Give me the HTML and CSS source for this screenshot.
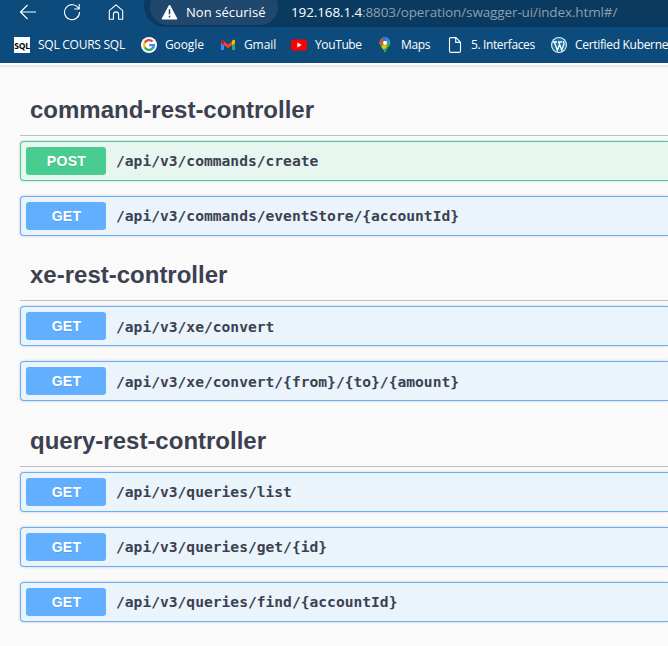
FILE: index.html
```html
<!DOCTYPE html>
<html lang="fr">
<head>
<meta charset="utf-8">
<title>Swagger UI</title>
<link rel="stylesheet" href="styles.css">
</head>
<body>
<header class="browser">
  <div class="toolbar">
    <svg class="nav" width="18" height="18" viewBox="0 0 18 18"><path d="M17 9H1.8M8.500 2L1.500 9l7 7"/></svg>
    <svg class="nav" width="18" height="18" viewBox="0 0 18 18"><path d="M15.600 5.600A7.500 7.500 0 1 0 16.500 9M16.200 1v5h-5"/></svg>
    <svg class="nav" width="18" height="18" viewBox="0 0 18 18"><path d="M2.300 7.700L9 1.800l6.700 5.900V16.200H11.600V11.500a2.600 2.600 0 0 0-5.200 0V16.200H2.300z"/></svg>
    <div class="address">
      <div class="security">
        <svg width="17" height="16" viewBox="0 0 17 16"><path d="M8.500 1L16 15H1z" fill="#fff" stroke="#fff" stroke-linejoin="round"/><path d="M8.500 5.300v5M8.500 11.800v1.700" stroke="#20486c" stroke-width="1.500"/></svg>
        <span class="security-text">Non sécurisé</span>
      </div>
      <div class="url"><span class="host">192.168.1.4</span><span class="path">:8803/operation/swagger-ui/index.html#/</span></div>
    </div>
  </div>
  <nav class="bookmarks">
    <div class="bookmark"><span class="sql-icon">SQL</span><span class="b-sql">SQL COURS SQL</span></div>
    <div class="bookmark"><svg width="16" height="16" viewBox="0 0 16 16"><circle cx="8" cy="8" r="8" fill="#fff"/><g fill="none" stroke-width="2.300"><path d="M11.500 4.500A4.900 4.900 0 0 0 3.700 5.700" stroke="#ea4335"/><path d="M3.700 5.700a4.900 4.900 0 0 0 0 4.600" stroke="#fbbc05"/><path d="M3.700 10.300A4.900 4.900 0 0 0 11.300 11.600" stroke="#34a853"/><path d="M11.300 11.600A4.900 4.900 0 0 0 12.900 8.100H8.200" stroke="#4285f4"/></g></svg><span class="b-google">Google</span></div>
    <div class="bookmark"><svg width="16" height="16" viewBox="0 0 16 16"><path d="M1 4v9h3V6z" fill="#4285f4"/><path d="M12 6v7h3V4z" fill="#34a853"/><path d="M12 4.300v4L15 6V4c0-1.500-1.800-2-3 .3z" fill="#fbbc04"/><path d="M1 4v2l3 2.300V4.300C3 2.500 1 2.500 1 4z" fill="#c5221f"/><path d="M4 4.300L8 7.400l4-3.100v4l-4 3-4-3z" fill="#ea4335"/></svg><span class="b-gmail">Gmail</span></div>
    <div class="bookmark"><svg width="16" height="16" viewBox="0 0 16 16"><rect y="2.500" width="16" height="11" rx="2.500" fill="#f00"/><path d="M6.300 5.400v5.200L10.700 8z" fill="#fff"/></svg><span class="b-youtube">YouTube</span></div>
    <div class="bookmark"><svg width="16" height="16" viewBox="0 0 16 16"><defs><clipPath id="pin"><path d="M8 .3a5.400 5.400 0 0 0-5.400 5.400C2.600 9.500 6.500 10.500 7.300 15q.7 1.400 1.400 0c.8-4.500 4.700-5.500 4.700-9.300A5.400 5.400 0 0 0 8 .3z"/></clipPath></defs><g clip-path="url(#pin)"><path fill="#34a853" d="M0 0h16v16H0z"/><path fill="#fbbc04" d="M0 11L10 0H0z M3 11l9-9-3 9-4 2z"/><path fill="#4285f4" d="M5 0h11L9 8 6 5z"/><path fill="#1a73e8" d="M5 0h4v4L6 5z"/><path fill="#ea4335" d="M0 0h4l3 4-4 4-3-1z"/></g><circle cx="8" cy="5.700" r="2" fill="#fff"/></svg><span class="b-maps">Maps</span></div>
    <div class="bookmark"><svg width="16" height="16" viewBox="0 0 16 16"><path d="M2.500 2q0-1.400 1.400-1.400h5l4.600 4.600v8.800q0 1.400-1.400 1.400H3.900q-1.400 0-1.400-1.400zM8.700.6v4.800h4.800" fill="none" stroke="#fff" stroke-width="1.100"/></svg><span class="b-interfaces">5. Interfaces</span></div>
    <div class="bookmark"><svg width="16" height="16" viewBox="0 0 16 16"><circle cx="8" cy="8" r="8" fill="#e5f1f5"/><circle cx="8" cy="8" r="6.900" fill="#17749d"/><path d="M2 5h4M7 5h4.200M3.400 5.200l3 8L8.600 7.300M7.800 5.200l3 8 2-5.700q.5-1.700-.5-3.300" fill="none" stroke="#fff" stroke-width="1.350"/></svg><span class="b-cert">Certified Kuberne</span></div>
  </nav>
</header>
<main class="swagger">
  <section class="tag">
    <h3>command-rest-controller</h3>
    <div class="op post"><span class="method">POST</span><span class="route">/api/v3/commands/create</span></div>
    <div class="op"><span class="method">GET</span><span class="route">/api/v3/commands/eventStore/{accountId}</span></div>
  </section>
  <section class="tag xe">
    <h3>xe-rest-controller</h3>
    <div class="op"><span class="method">GET</span><span class="route">/api/v3/xe/convert</span></div>
    <div class="op"><span class="method">GET</span><span class="route">/api/v3/xe/convert/{from}/{to}/{amount}</span></div>
  </section>
  <section class="tag last">
    <h3>query-rest-controller</h3>
    <div class="op"><span class="method">GET</span><span class="route">/api/v3/queries/list</span></div>
    <div class="op"><span class="method">GET</span><span class="route">/api/v3/queries/get/{id}</span></div>
    <div class="op"><span class="method">GET</span><span class="route">/api/v3/queries/find/{accountId}</span></div>
  </section>
</main>
</body>
</html>
```
FILE: styles.css
```css
* { box-sizing: border-box; }
body {
  margin: 0;
  height: 646px;
  overflow: hidden;
  background: #fafafa;
  color: #3b4151;
  font-family: "Liberation Sans", Arial, sans-serif;
}
.browser {
  height: 63px;
  overflow: hidden;
  background: #0d4b7c;
  color: #fff;
  font-family: "Open Sans", sans-serif;
  white-space: nowrap;
}
.toolbar {
  display: flex;
  height: 27px;
  padding-left: 19px;
}
.nav {
  flex: none;
  margin: 3px 26px 0 0;
  fill: none;
  stroke: #fff;
  stroke-width: 1.1;
  stroke-linejoin: round;
}
.address {
  display: flex;
  flex: 1;
  height: 42px;
  margin: -15px 0 0 -7px;
  padding: 15px 0 0 6px;
  border-radius: 21px 0 0 21px;
  background: #0a3a60;
}
.security {
  display: flex;
  width: 128px;
  height: 36px;
  margin-top: -11px;
  padding: 15px 0 0 11px;
  border-radius: 18px;
  background: #20486c;
}
.security-text { margin-left: 8px; font-size: 13px; line-height: 17px; letter-spacing: .07px; }
.url { margin-left: 13px; font-size: 13.500px; line-height: 25px; letter-spacing: -.12px; }
.path { color: #8c9fac; }
.bookmarks {
  display: grid;
  grid-template-columns: 127px 79px 71px 86px 70px 104px 130px;
  height: 36px;
  padding: 10px 0 0 14px;
  font-size: 12px;
  line-height: 16px;
}
.bookmark { display: flex; gap: 8px; }
.bookmark svg { flex: none; }
.b-sql { letter-spacing: -.25px; }
.b-google, .b-gmail { letter-spacing: -.1px; }
.b-youtube, .b-maps, .b-interfaces { letter-spacing: -.38px; }
.b-cert { letter-spacing: -.32px; }
.sql-icon {
  width: 16px;
  height: 16px;
  background: #fff;
  color: #000;
  font: bold 8.500px/17px "Open Sans", sans-serif;
  letter-spacing: -.2px;
  text-align: center;
}
.swagger {
  padding-left: 20px;
  border-top: 2px solid #fff;
  background: linear-gradient(#e4e4e4, #fafafa 4px);
}
.tag { margin-bottom: 24px; }
.tag:first-child { padding-top: 5px; }
.tag h3 {
  height: 41px;
  margin: 0 0 5px;
  padding-left: 10px;
  border-bottom: 1px solid #bdbec2;
  font-size: 24px;
  line-height: 30px;
}
.tag:first-child h3 { height: 66px; padding-top: 25px; }
.tag.last { margin-top: 25px; }
.op {
  display: flex;
  align-items: center;
  height: 40px;
  margin-bottom: 15px;
  padding-left: 5px;
  border: 1px solid #61affe;
  border-right: 0;
  border-radius: 4px 0 0 4px;
  background: #ebf3fb;
  box-shadow: 0 0 3px rgba(0, 0, 0, .19);
}
.method {
  width: 80px;
  height: 28px;
  border-radius: 3px;
  background: #61affe;
  color: #fff;
  font-size: 14px;
  font-weight: bold;
  line-height: 28px;
  letter-spacing: .3px;
  padding-left: 1px;
  text-align: center;
  text-shadow: 0 1px 0 rgba(0, 0, 0, .1);
}
.post { border-color: #49cc90; background: #e8f6f0; }
.post .method { background: #49cc90; }
.route {
  padding: 0 10px;
  font: bold 14.610px/20px "DejaVu Sans Mono", monospace;
}
.xe .route { padding-top: 2px; }
```
